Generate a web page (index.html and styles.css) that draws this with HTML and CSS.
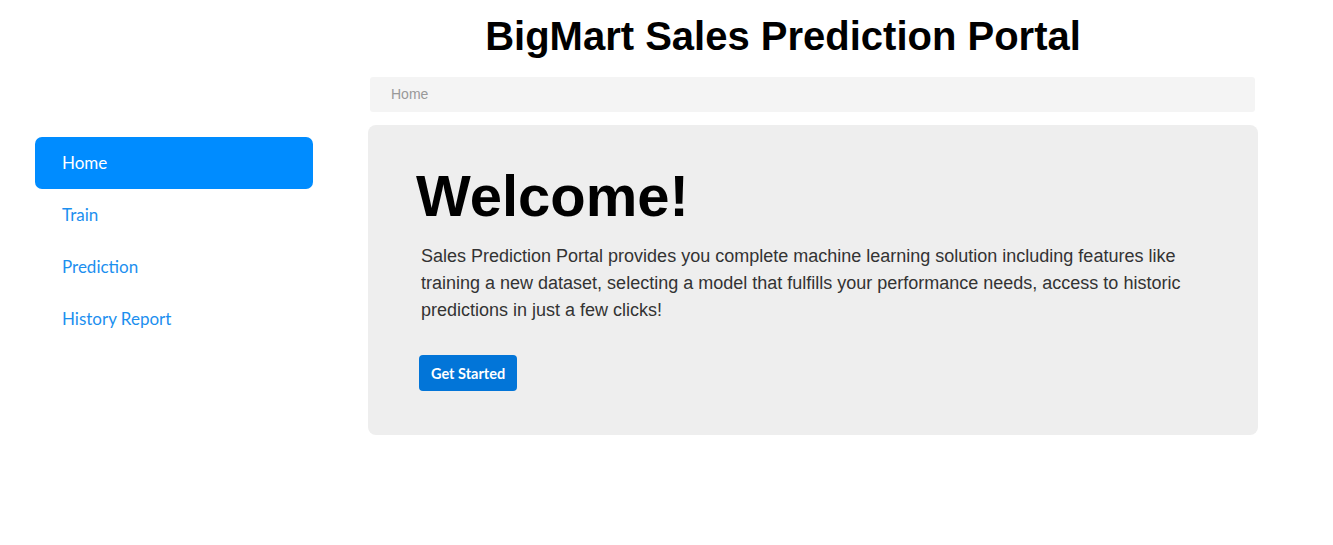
FILE: index.html
```html
<!DOCTYPE html>
<html>
<head>
<meta charset="utf-8">
<link rel="stylesheet" href="styles.css">
</head>
<body>
<div class="page">
  <nav class="sidebar">
    <a class="nav-item active">Home</a>
    <a class="nav-item">Train</a>
    <a class="nav-item">Prediction</a>
    <a class="nav-item">History Report</a>
  </nav>
  <main class="main">
    <h1 class="title">BigMart Sales Prediction Portal</h1>
    <div class="breadcrumb">Home</div>
    <section class="jumbotron">
      <h2 class="welcome">Welcome!</h2>
      <p class="lead">Sales Prediction Portal provides you complete machine learning solution including features like training a new dataset, selecting a model that fulfills your performance needs, access to historic predictions in just a few clicks!</p>
      <button class="btn">Get Started</button>
    </section>
  </main>
</div>
</body>
</html>
```
FILE: styles.css
```css
html, body {
  margin: 0;
  padding: 0;
  background: #ffffff;
}
.page {
  display: flex;
  align-items: flex-start;
}
.sidebar {
  width: 278px;
  margin-left: 35px;
  padding-top: 137px;
  display: flex;
  flex-direction: column;
}
.nav-item {
  display: block;
  height: 52px;
  line-height: 52px;
  padding-left: 27px;
  border-radius: 7px;
  font-family: Lato, "Open Sans", sans-serif;
  font-size: 17px;
  color: #1c8fef;
}
.nav-item.active {
  background: #008cff;
  color: #ffffff;
}
.main {
  margin-left: 55px;
  width: 890px;
}
.title {
  margin: 0;
  padding: 11px 60px 0 0;
  height: 77px;
  box-sizing: border-box;
  text-align: center;
  font-family: "Liberation Sans", Arial, sans-serif;
  font-weight: bold;
  font-size: 40px;
  line-height: 50px;
  color: #000;
}
.breadcrumb {
  margin: 0 3px 13px 2px;
  height: 35px;
  line-height: 35px;
  padding-left: 21px;
  background: #f4f4f4;
  border-radius: 3px;
  font-family: "Liberation Sans", Arial, sans-serif;
  font-size: 14px;
  color: #999999;
}
.jumbotron {
  background: #eeeeee;
  border-radius: 8px;
  height: 310px;
  box-sizing: border-box;
  padding: 36px 48px 0 48px;
}
.welcome {
  margin: 0;
  font-family: "Liberation Sans", Arial, sans-serif;
  font-weight: bold;
  font-size: 58px;
  line-height: 70px;
  color: #000;
}
.lead {
  margin: 12px 0 0 5px;
  font-family: "Liberation Sans", Arial, sans-serif;
  font-size: 18px;
  line-height: 27px;
  color: #333333;
  max-width: 770px;
}
.btn {
  display: block;
  margin: 31px 0 0 3px;
  height: 36px;
  padding: 0 12px;
  border: none;
  border-radius: 4px;
  background: #0275d8;
  color: #ffffff;
  font-family: Lato, "Open Sans", sans-serif;
  font-weight: bold;
  font-size: 14.5px;
}
```
